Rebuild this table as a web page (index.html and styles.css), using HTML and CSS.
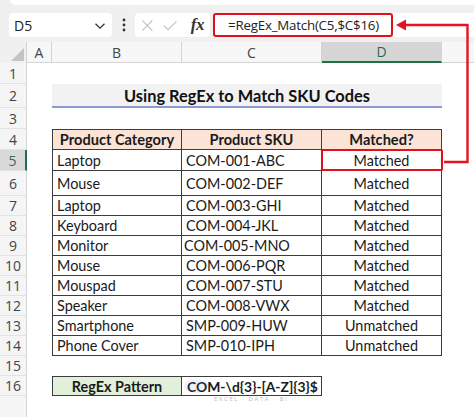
FILE: index.html
```html
<!DOCTYPE html>
<html>
<head>
<meta charset="utf-8">
<link rel="stylesheet" href="styles.css">
</head>
<body>
<div class="app">
  <div class="topbar">
    <div class="ribbon-edge"></div>
    <div class="fbar">
      <div class="namebox">
        <span>D5</span>
        <svg class="chev" width="12" height="8" viewBox="0 0 12 8"><path d="M1.5 1.8 L6 6.2 L10.5 1.8" fill="none" stroke="#333" stroke-width="1.3"/></svg>
      </div>
      <div class="dots">
        <svg width="4" height="14" viewBox="0 0 4 14"><circle cx="2" cy="2" r="1.4" fill="#333"/><circle cx="2" cy="7" r="1.4" fill="#333"/><circle cx="2" cy="12" r="1.4" fill="#333"/></svg>
      </div>
      <div class="btns">
        <svg width="15" height="15" viewBox="0 0 15 15"><path d="M1.5 1.5 L13.5 13.5 M13.5 1.5 L1.5 13.5" stroke="#bdbdbd" stroke-width="1.2"/></svg>
        <svg width="17" height="13" viewBox="0 0 17 13"><path d="M1 6.5 L6 11.5 L16 1.5" fill="none" stroke="#bdbdbd" stroke-width="1.2"/></svg>
        <span class="fx">fx</span>
      </div>
      <div class="formula">
        <div class="formula-hl">=RegEx_Match(C5,$C$16)</div>
      </div>
    </div>
  </div>

  <div class="sheet">
    <div class="r colheads">
      <div class="corner"><svg width="13" height="13" viewBox="0 0 13 13"><path d="M13 0 V13 H0 Z" fill="#c4c4c4"/></svg></div>
      <div class="ch">A</div>
      <div class="ch">B</div>
      <div class="ch">C</div>
      <div class="ch sel">D</div>
      <div class="ch last"></div>
    </div>

    <div class="r h21"><div class="rh">1</div><div></div><div></div><div></div><div></div><div></div></div>
    <div class="r h24"><div class="rh">2</div><div></div><div class="title">Using RegEx to Match SKU Codes</div><div></div></div>
    <div class="r h21"><div class="rh">3</div><div></div><div></div><div></div><div></div><div></div></div>
    <div class="r h21"><div class="rh">4</div><div></div><div class="t th first">Product Category</div><div class="t th">Product SKU</div><div class="t th">Matched?</div><div></div></div>
    <div class="r h21"><div class="rh selrow">5</div><div></div><div class="t first">Laptop</div><div class="t">COM-001-ABC</div><div class="t ctr hl">Matched</div><div></div></div>
    <div class="r h25"><div class="rh">6</div><div></div><div class="t first">Mouse</div><div class="t">COM-002-DEF</div><div class="t ctr">Matched</div><div></div></div>
    <div class="r"><div class="rh">7</div><div></div><div class="t first">Laptop</div><div class="t">COM-003-GHI</div><div class="t ctr">Matched</div><div></div></div>
    <div class="r"><div class="rh">8</div><div></div><div class="t first">Keyboard</div><div class="t">COM-004-JKL</div><div class="t ctr">Matched</div><div></div></div>
    <div class="r"><div class="rh">9</div><div></div><div class="t first">Monitor</div><div class="t tight">COM-005-MNO</div><div class="t ctr">Matched</div><div></div></div>
    <div class="r"><div class="rh">10</div><div></div><div class="t first">Mouse</div><div class="t">COM-006-PQR</div><div class="t ctr">Matched</div><div></div></div>
    <div class="r"><div class="rh">11</div><div></div><div class="t first">Mouspad</div><div class="t">COM-007-STU</div><div class="t ctr">Matched</div><div></div></div>
    <div class="r"><div class="rh">12</div><div></div><div class="t first">Speaker</div><div class="t">COM-008-VWX</div><div class="t ctr">Matched</div><div></div></div>
    <div class="r"><div class="rh">13</div><div></div><div class="t first">Smartphone</div><div class="t">SMP-009-HUW</div><div class="t ctr">Unmatched</div><div></div></div>
    <div class="r"><div class="rh">14</div><div></div><div class="t first">Phone Cover</div><div class="t">SMP-010-IPH</div><div class="t ctr">Unmatched</div><div></div></div>
    <div class="r"><div class="rh">15</div><div></div><div></div><div></div><div></div><div></div></div>
    <div class="r"><div class="rh">16</div><div></div><div class="t first top green">RegEx Pattern</div><div class="t top pat">COM-\d{3}-[A-Z]{3}$</div><div></div><div></div></div>
    <div class="r rest"><div class="rh"></div><div></div><div></div><div></div><div></div><div></div></div>
  </div>

  <svg class="arrow" width="474" height="417" viewBox="0 0 474 417">
    <ellipse cx="196" cy="386" rx="12" ry="7" fill="#6f93c4" opacity="0.12"/>
    <path d="M403 25 H467.5 V162 H444" fill="none" stroke="#e5121f" stroke-width="2.4"/>
    <path d="M396 25 L406 19.5 L406 30.5 Z" fill="#e5121f"/>
  </svg>

  <div class="watermark">EXCEL · DATA · BI</div>
</div>
</body>
</html>
```

FILE: styles.css
```css
* { box-sizing: border-box; }
html, body { margin: 0; padding: 0; background: #fff; }
.app {
  position: relative;
  width: 474px;
  height: 417px;
  overflow: hidden;
  font-family: "Lato", "Liberation Sans", sans-serif;
  color: #111;
}

/* ---------- top / formula bar ---------- */
.topbar {
  height: 42px;
  background: #f0f0f0;
  display: flex;
  flex-direction: column;
}
.ribbon-edge {
  height: 5px;
  margin-left: 10px;
  background: #fff;
  border-bottom-left-radius: 6px;
}
.fbar {
  margin-top: 8px;
  height: 24px;
  display: flex;
  align-items: stretch;
}
.namebox {
  margin-left: 9px;
  width: 103px;
  background: #fff;
  border-radius: 4px;
  display: flex;
  align-items: center;
  justify-content: space-between;
  padding: 0 6px 0 5px;
  font-family: "Open Sans", "Noto Sans", sans-serif;
  font-size: 14px;
  color: #222;
}
.chev { margin-top: 1px; }
.dots {
  width: 23px;
  display: flex;
  align-items: center;
  justify-content: center;
}
.btns {
  width: 75px;
  background: #fff;
  border-radius: 4px;
  display: flex;
  align-items: center;
  padding: 0 6px 0 6px;
  gap: 9px;
}
.fx {
  margin-left: 5px;
  font-family: "Liberation Serif", serif;
  font-style: italic;
  font-weight: 700;
  font-size: 17px;
  color: #333;
  letter-spacing: -0.5px;
}
.formula {
  margin-left: 3px;
  flex: 1;
  background: #fff;
  border-radius: 3px 0 0 3px;
  display: flex;
}
.formula-hl {
  width: 180px;
  border: 2px solid #e0101c;
  border-radius: 3px;
  display: flex;
  align-items: center;
  padding-left: 13px;
  font-family: "Open Sans", "Noto Sans", sans-serif;
  font-size: 13.3px;
  color: #222;
  letter-spacing: -0.2px;
  white-space: nowrap;
}

/* ---------- sheet grid ---------- */
.r {
  display: grid;
  grid-template-columns: 27px 25px 130px 140px 120px 32px;
  height: 20px;
}
.h21 { height: 21px; }
.h24 { height: 24px; }
.h25 { height: 25px; }
.rest { height: 40px; }

.colheads { height: 21px; background: #f5f5f5; }
.corner {
  background: #f0f0f0;
  border-right: 1px solid #d4d4d4;
  display: flex;
  align-items: flex-end;
  justify-content: flex-end;
  padding: 0 2px 2px 0;
}
.ch {
  background: #f7f7f7;
  border-right: 1px solid #d4d4d4;
  border-bottom: 1px solid #d4d4d4;
  display: flex;
  align-items: center;
  justify-content: center;
  font-family: "Open Sans", "Noto Sans", sans-serif;
  font-size: 14px;
  color: #444;
}
.ch.last { border-right: none; }
.ch.sel {
  background: #d6d6d6;
  border-bottom: 2px solid #1e7145;
  color: #2e6a48;
}
.rh {
  background: #f5f5f5;
  border-right: 1px solid #d4d4d4;
  border-bottom: 1px solid #e2e2e2;
  display: flex;
  align-items: center;
  justify-content: center;
  font-family: "Open Sans", "Noto Sans", sans-serif;
  font-size: 14px;
  color: #444;
}
.rh.selrow {
  background: #d9d9d9;
  border-right: 2px solid #1e7145;
  color: #3b6b50;
}

.title {
  grid-column: span 3;
  background: #f2f2f2;
  border-bottom: 2px solid #8e9bd3;
  display: flex;
  align-items: center;
  justify-content: center;
  font-weight: 700;
  font-size: 16.4px;
  color: #111;
}

.t {
  border-right: 1px solid #3c3c3c;
  border-bottom: 1px solid #3c3c3c;
  display: flex;
  align-items: center;
  padding-left: 4px;
  font-size: 14.4px;
  white-space: nowrap;
  color: #1a1a1a;
}
.t.first { border-left: 1px solid #3c3c3c; }
.t.tight { padding-left: 2px; }
.t.ctr { justify-content: center; padding-left: 0; }
.th {
  border-top: 1px solid #3c3c3c;
  background: #fbe3d6;
  justify-content: center;
  padding-left: 0;
  font-weight: 700;
  font-size: 14.6px;
}
.t.top { border-top: 1px solid #3c3c3c; }
.green {
  background: #e2efda;
  justify-content: center;
  padding-left: 0;
  font-weight: 700;
}
.pat { font-weight: 700; padding-left: 5px; font-size: 13.9px; }

.hl { position: relative; }
.hl::after {
  content: "";
  position: absolute;
  left: -1px;
  top: -1px;
  right: -2px;
  bottom: -1px;
  border: 2px solid #e0101c;
  border-radius: 2px;
}

/* ---------- overlays ---------- */
.arrow {
  position: absolute;
  left: 0;
  top: 0;
  pointer-events: none;
}
.watermark {
  position: absolute;
  left: 214px;
  top: 396px;
  font-family: "Open Sans", sans-serif;
  font-size: 6px;
  line-height: 7px;
  letter-spacing: 1.6px;
  color: #bcbcbc;
  pointer-events: none;
}
```
